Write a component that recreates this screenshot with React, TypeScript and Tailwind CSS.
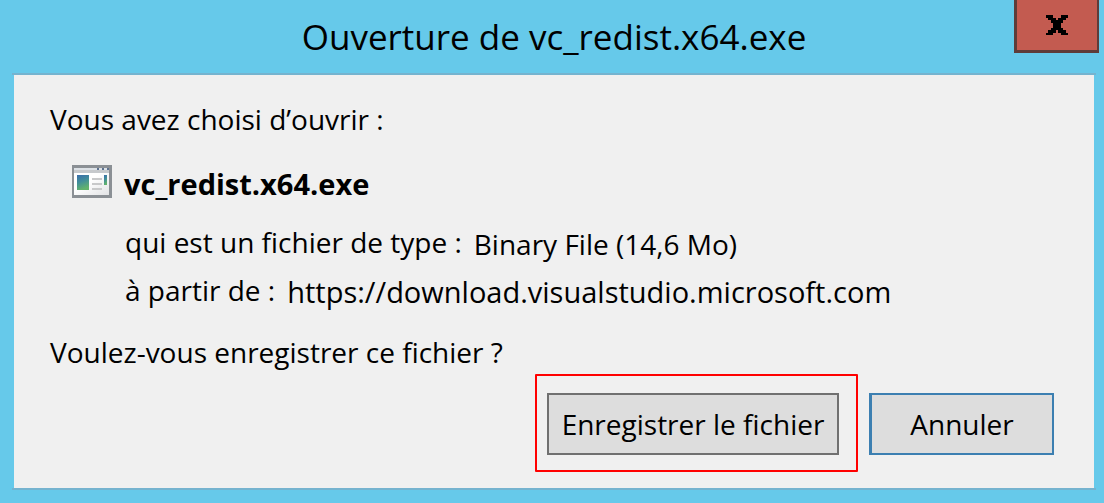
import React from "react";

function ProgramIcon() {
  return (
    <svg className="h-[33px] w-10 shrink-0" viewBox="0 0 40 33" shapeRendering="crispEdges" aria-hidden="true">
      <defs>
        <linearGradient id="pane" x1="0" y1="0" x2="0.3" y2="1">
          <stop offset="0" stopColor="#3a6cab" />
          <stop offset="0.5" stopColor="#418f99" />
          <stop offset="1" stopColor="#62b36c" />
        </linearGradient>
        <linearGradient id="sheet" x1="0" y1="0" x2="1" y2="1">
          <stop offset="0.4" stopColor="#ffffff" />
          <stop offset="1" stopColor="#e2e3e5" />
        </linearGradient>
      </defs>
      <rect width="40" height="33" fill="#8b9095" />
      <rect x="2" y="3" width="35" height="2" fill="#dde2e7" />
      <rect x="2" y="5" width="35" height="3" fill="#c6c9cc" />
      <rect x="2" y="8" width="35" height="22" fill="url(#sheet)" />
      <path d="M25 3h2v2h-2zM30 3h2v2h-2zM35 3h2v2h-2z" fill="#5d7290" />
      <rect x="5" y="10" width="12" height="15" fill="url(#pane)" />
      <path d="M20 13h10v2H20zM20 18h10v2H20zM20 23h10v2H20z" fill="#c8c9ca" />
      <rect x="32" y="10" width="3" height="10" fill="url(#pane)" />
    </svg>
  );
}

function CloseIcon() {
  return (
    <svg className="h-5 w-[22px]" viewBox="0 0 22 20" shapeRendering="crispEdges" aria-hidden="true">
      <path
        d="M0 0h7v3H0zM15 0h7v3h-7zM2 3h8v2H2zM12 3h8v2h-8zM5 5h12v3H5zM7 8h8v5H7zM5 13h12v2H5zM2 15h8v3H2zM12 15h8v3h-8zM0 18h7v2H0zM15 18h7v2h-7z"
        fill="#000"
      />
    </svg>
  );
}

export default function App() {
  return (
    <main className="flex min-h-screen flex-col bg-[#66c9ea] pr-2 pb-[13px] pl-3 font-['Open_Sans','Noto_Sans',sans-serif] text-[28px] leading-9 text-black">
      <header className="grid h-[73px] grid-cols-[1fr_auto_1fr] items-start">
        <span />
        <h1 className="pt-[14px] text-[35px] leading-[46px]">Ouverture de vc_redist.x64.exe</h1>
        <button
          type="button"
          aria-label="Fermer"
          className="-mr-[3px] flex h-[53px] w-[85px] items-center justify-center justify-self-end border-r-2 border-b-[3px] border-l-[3px] border-[#5e3c3a] bg-[#c35b50]"
        >
          <CloseIcon />
        </button>
      </header>

      <section className="flex grow flex-col border-y-2 border-[#75b3cf] px-[2px]">
        <div className="grow bg-[#f0f0f0] pt-[26px] pr-10 pb-4 pl-9">
          <p>Vous avez choisi d’ouvrir :</p>
          <div className="mt-7 flex items-start gap-3 pl-[22px]">
            <ProgramIcon />
            <strong className="pt-px text-[29px] font-bold">vc_redist.x64.exe</strong>
          </div>
          <dl className="mt-[22px] flex flex-col gap-[10px] pl-[75px]">
            <div className="flex gap-3">
              <dt>qui est un fichier de type :</dt>
              <dd className="pt-[2px]">Binary File (14,6 Mo)</dd>
            </div>
            <div className="flex gap-3">
              <dt>à partir de :</dt>
              <dd className="pt-[2px] text-[29px]">https://download.visualstudio.microsoft.com</dd>
            </div>
          </dl>
          <p className="mt-6">Voulez-vous enregistrer ce fichier ?</p>
          <div className="mt-1 flex items-start justify-end gap-[11px]">
            <div className="rounded-[1px] border-2 border-[#ff0000] pt-[17px] pr-[17px] pb-[15px] pl-[10px]">
              <button type="button" className="h-[62px] w-[292px] border-2 border-[#707070] bg-[#dddddd]">
                Enregistrer le fichier
              </button>
            </div>
            <button
              type="button"
              className="mt-[19px] h-[62px] w-[185px] border-2 border-l-[3px] border-[#3c7fb1] bg-[#dddddd]"
            >
              Annuler
            </button>
          </div>
        </div>
      </section>
    </main>
  );
}
